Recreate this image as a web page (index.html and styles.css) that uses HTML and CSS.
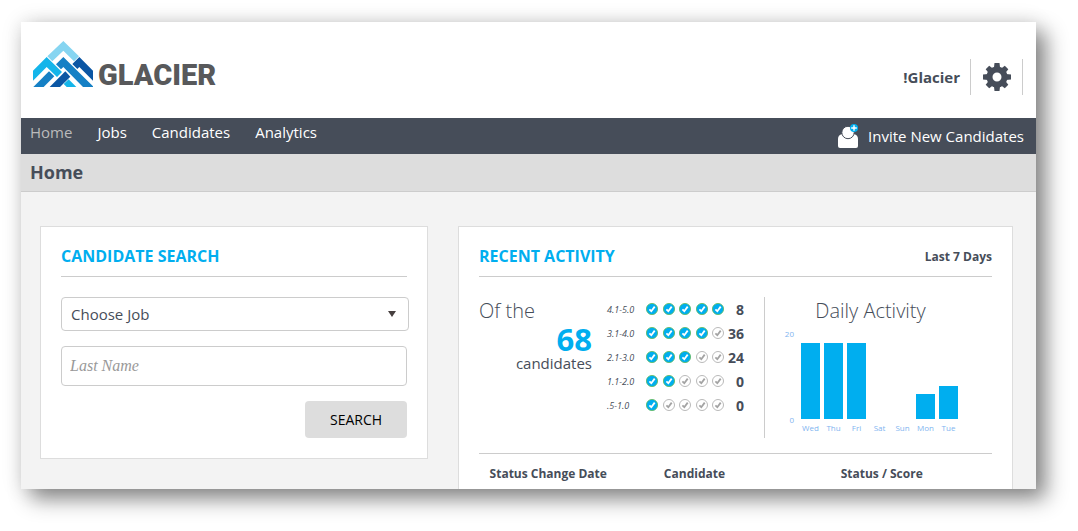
FILE: index.html
```html
<!DOCTYPE html>
<html lang="en">
<head>
    <meta charset="UTF-8">
    <meta name="viewport" content="width=device-width, initial-scale=1.0">
    <title>Glacier - Home</title>
    <link rel="stylesheet" href="styles.css">
</head>
<body>
    <!-- shared icons -->
    <svg class="defs" aria-hidden="true">
        <symbol id="check-on" viewBox="0 0 12 12">
            <circle cx="6" cy="6" r="5.6" fill="#00aeef" stroke="#5cb85c" stroke-width="0.8"/>
            <path d="M3.4 6.4l1.9 1.8 3.4-4.6" fill="none" stroke="#fff" stroke-width="1.8"/>
        </symbol>
        <symbol id="check-off" viewBox="0 0 12 12">
            <circle cx="6" cy="6" r="5.5" fill="#fff" stroke="#b9b9b9" stroke-width="1"/>
            <path d="M3.4 6.4l1.9 1.8 3.4-4.6" fill="none" stroke="#a3a3a3" stroke-width="1.8"/>
        </symbol>
    </svg>

    <div class="page">
        <header class="header">
            <a href="#" class="logo">
                <svg class="logo-mark" viewBox="0 0 180 138" aria-hidden="true">
                    <path fill="#86d5f1" d="M91 0L138 46 123 61 91 29 58 61 43 46z"/>
                    <path fill="#14b5ea" d="M0 89L41 48 87 93 72 108 41 78 0 119z"/>
                    <path fill="#1580c5" d="M91 48L180 136V138H150L91 78 84 85 69 70z"/>
                    <path fill="#0b56a4" d="M139 48L180 89V119L139 78 133 84 118 69z"/>
                    <path fill="#1580c5" d="M1 138L48 91 64 106 32 138z"/>
                    <path fill="#0b56a4" d="M50 138L97 91 112 107 81 138z"/>
                    <path fill="#14b5ea" d="M107 115L130 138H101L92 129z"/>
                </svg>
                <span class="logo-text">GLACIER</span>
            </a>
            <div class="account">
                <span class="account-name">!Glacier</span>
                <a href="#" class="settings" aria-label="Settings">
                    <svg viewBox="0 0 28 28" fill="#464d59">
                        <circle cx="14" cy="14" r="7.5" fill="none" stroke="#464d59" stroke-width="6"/>
                        <path d="M11.5 0h5l.6 5h-6.2zM11.5 28h5l.6-5h-6.2zM0 11.5v5l5 .6v-6.2zM28 11.5v5l-5 .6v-6.2z"/>
                        <path transform="rotate(45 14 14)" d="M11.5 0.5h5l.6 5h-6.2zM11.5 27.5h5l.6-5h-6.2zM0.5 11.5v5l5 .6v-6.2zM27.5 11.5v5l-5 .6v-6.2z"/>
                    </svg>
                </a>
            </div>
        </header>

        <nav class="navbar">
            <ul class="menu">
                <li><a href="#" class="active">Home</a></li>
                <li><a href="#">Jobs</a></li>
                <li><a href="#">Candidates</a></li>
                <li><a href="#">Analytics</a></li>
            </ul>
            <a href="#" class="invite">
                <svg viewBox="0 0 20 24" aria-hidden="true">
                    <path fill="#fff" d="M0 22v-7q0-4 4-5h12q4 1 4 5v7q0 2-2 2H2q-2 0-2-2z"/>
                    <circle cx="10" cy="8.5" r="6.2" fill="#fff" stroke="#464d59" stroke-width="1"/>
                    <circle cx="16" cy="4" r="4" fill="#00aeef"/>
                    <path d="M16 1.2v5.6M13.2 4h5.6" stroke="#fff" stroke-width="1.4"/>
                </svg>
                Invite New Candidates
            </a>
        </nav>

        <h1 class="page-title">Home</h1>

        <main class="content">
            <section class="card search-card">
                <div class="card-header">
                    <h2>CANDIDATE SEARCH</h2>
                </div>
                <form class="search-form">
                    <select name="job" aria-label="Choose Job">
                        <option>Choose Job</option>
                    </select>
                    <input type="text" name="lastname" placeholder="Last Name" aria-label="Last Name">
                    <button type="submit">SEARCH</button>
                </form>
            </section>

            <section class="card activity-card">
                <div class="card-header">
                    <h2>RECENT ACTIVITY</h2>
                    <span class="period">Last 7 Days</span>
                </div>

                <div class="summary">
                    <div class="total">
                        <div class="total-label">Of the</div>
                        <div class="total-number">68</div>
                        <div class="total-unit">candidates</div>
                    </div>

                    <div class="scores">
                        <div class="score-row">
                            <span class="range">4.1-5.0</span>
                            <span class="checks">
                                <svg><use href="#check-on"/></svg>
                                <svg><use href="#check-on"/></svg>
                                <svg><use href="#check-on"/></svg>
                                <svg><use href="#check-on"/></svg>
                                <svg><use href="#check-on"/></svg>
                            </span>
                            <span class="count">8</span>
                        </div>
                        <div class="score-row">
                            <span class="range">3.1-4.0</span>
                            <span class="checks">
                                <svg><use href="#check-on"/></svg>
                                <svg><use href="#check-on"/></svg>
                                <svg><use href="#check-on"/></svg>
                                <svg><use href="#check-on"/></svg>
                                <svg><use href="#check-off"/></svg>
                            </span>
                            <span class="count">36</span>
                        </div>
                        <div class="score-row">
                            <span class="range">2.1-3.0</span>
                            <span class="checks">
                                <svg><use href="#check-on"/></svg>
                                <svg><use href="#check-on"/></svg>
                                <svg><use href="#check-on"/></svg>
                                <svg><use href="#check-off"/></svg>
                                <svg><use href="#check-off"/></svg>
                            </span>
                            <span class="count">24</span>
                        </div>
                        <div class="score-row">
                            <span class="range">1.1-2.0</span>
                            <span class="checks">
                                <svg><use href="#check-on"/></svg>
                                <svg><use href="#check-on"/></svg>
                                <svg><use href="#check-off"/></svg>
                                <svg><use href="#check-off"/></svg>
                                <svg><use href="#check-off"/></svg>
                            </span>
                            <span class="count">0</span>
                        </div>
                        <div class="score-row">
                            <span class="range">.5-1.0</span>
                            <span class="checks">
                                <svg><use href="#check-on"/></svg>
                                <svg><use href="#check-off"/></svg>
                                <svg><use href="#check-off"/></svg>
                                <svg><use href="#check-off"/></svg>
                                <svg><use href="#check-off"/></svg>
                            </span>
                            <span class="count">0</span>
                        </div>
                    </div>

                    <div class="daily">
                        <h3>Daily Activity</h3>
                        <div class="chart">
                            <div class="axis"><span>20</span><span>0</span></div>
                            <div class="bars">
                                <div class="bar" style="height: 90%"></div>
                                <div class="bar" style="height: 90%"></div>
                                <div class="bar" style="height: 90%"></div>
                                <div class="bar" style="height: 0%"></div>
                                <div class="bar" style="height: 0%"></div>
                                <div class="bar" style="height: 30%"></div>
                                <div class="bar" style="height: 39%"></div>
                            </div>
                            <div class="days">
                                <span>Wed</span><span>Thu</span><span>Fri</span><span>Sat</span><span>Sun</span><span>Mon</span><span>Tue</span>
                            </div>
                        </div>
                    </div>
                </div>

                <table class="history">
                    <thead>
                        <tr>
                            <th class="col-date">Status Change Date</th>
                            <th class="col-name">Candidate</th>
                            <th>Status / Score</th>
                        </tr>
                    </thead>
                </table>
            </section>
        </main>
    </div>
</body>
</html>
```

FILE: styles.css
```css
* {
    box-sizing: border-box;
}

body {
    margin: 0;
    padding: 22px 42px 42px 21px;
    background-color: #fff;
    color: #464d59;
    font-family: "Open Sans", "Noto Sans", sans-serif;
    font-size: 15px;
}

a {
    color: inherit;
    text-decoration: none;
}

h1, h2, h3 {
    margin: 0;
}

.defs {
    display: none;
}

.page {
    background-color: #f3f3f3;
    box-shadow: 10px 10px 20px rgba(0, 0, 0, 0.45), 0 0 20px rgba(0, 0, 0, 0.12);
}

/* header */
.header {
    display: flex;
    justify-content: space-between;
    align-items: center;
    height: 96px;
    padding: 0 13px 0 12px;
    background-color: #fff;
}

.logo {
    display: flex;
    align-items: flex-end;
    gap: 5px;
    padding-bottom: 12px;
}

.logo-mark {
    width: 60px;
    height: 46px;
}

.logo-text {
    color: #58595b;
    font-family: "Roboto", "Liberation Sans", sans-serif;
    font-size: 29px;
    font-weight: 900;
    line-height: 24px;
}

.account {
    display: flex;
    align-items: center;
    margin-top: 14px;
    font-weight: bold;
}

.account-name {
    padding-right: 10px;
}

.settings {
    display: flex;
    align-items: center;
    height: 36px;
    padding: 0 11px 0 12px;
    border-left: 1px solid #ccc;
    border-right: 1px solid #ccc;
}

.settings svg {
    width: 28px;
    height: 28px;
}

/* navigation */
.navbar {
    display: flex;
    justify-content: space-between;
    height: 36px;
    padding: 0 12px 0 9px;
    background-color: #464d59;
    color: #fff;
}

.menu {
    display: flex;
    gap: 25px;
    margin: 0;
    padding: 0;
    list-style: none;
    line-height: 28px;
}

.menu .active {
    color: #bbb;
}

.invite {
    display: flex;
    align-items: center;
    gap: 10px;
    line-height: 34px;
}

.invite svg {
    width: 20px;
    height: 24px;
}

.page-title {
    padding: 0 9px;
    background-color: #ddd;
    border-bottom: 1px solid #ccc;
    font-size: 18px;
    line-height: 37px;
}

/* cards */
.content {
    display: grid;
    grid-template-columns: 388fr 555fr;
    align-items: start;
    gap: 30px;
    padding: 34px 23px 0 19px;
}

.card {
    padding: 20px;
    background-color: #fff;
    border: 1px solid #ddd;
}

.card-header {
    display: flex;
    justify-content: space-between;
    padding-bottom: 10px;
    border-bottom: 1px solid #ccc;
    line-height: 19px;
}

.card-header h2 {
    color: #00aeef;
    font-size: 16px;
}

.period {
    font-size: 12px;
    font-weight: bold;
}

/* candidate search */
.search-form {
    display: flex;
    flex-direction: column;
    gap: 15px;
    padding-top: 20px;
}

.search-form select,
.search-form input {
    width: 100%;
    border: 1px solid #ccc;
    border-radius: 4px;
    background-color: #fff;
}

.search-form select {
    width: calc(100% + 2px);
    height: 34px;
    padding: 0 9px;
    appearance: none;
    background-image: url("data:image/svg+xml,%3Csvg xmlns='http://www.w3.org/2000/svg' viewBox='0 0 8 6'%3E%3Cpath fill='%23463f3f' d='M0 0h8L4 6z'/%3E%3C/svg%3E");
    background-repeat: no-repeat;
    background-position: right 12px center;
    background-size: 8px 6px;
    color: #464d59;
    font-family: inherit;
    font-size: 15px;
}

.search-form input {
    height: 40px;
    padding: 0 8px;
    font-family: "Liberation Serif", serif;
    font-size: 16px;
    font-style: italic;
}

.search-form input::placeholder {
    color: #999;
}

.search-form button {
    align-self: flex-end;
    width: 102px;
    height: 37px;
    border: none;
    border-radius: 4px;
    background-color: #ddd;
    color: #000;
    font-family: inherit;
    font-size: 14px;
    cursor: pointer;
}

/* recent activity */
.activity-card {
    padding-bottom: 0;
    border-bottom: none;
}

.summary {
    display: flex;
    padding: 20px 0 15px;
    border-bottom: 1px solid #ccc;
}

.total {
    width: 113px;
    margin-right: 15px;
    text-align: right;
}

.total-label {
    text-align: left;
    font-size: 20px;
    font-weight: 300;
    line-height: 28px;
}

.total-number {
    color: #00aeef;
    font-size: 31px;
    font-weight: bold;
    line-height: 28px;
}

.total-unit {
    line-height: 20px;
}

.scores {
    width: 157px;
    padding-right: 20px;
}

.score-row {
    display: flex;
    align-items: center;
    height: 24px;
}

.range {
    width: 39px;
    font-size: 9px;
    font-style: italic;
}

.checks {
    display: flex;
    justify-content: space-between;
    width: 78px;
}

.checks svg {
    width: 12px;
    height: 12px;
}

.count {
    flex: 1;
    font-size: 14px;
    font-weight: bold;
    text-align: right;
}

.daily {
    flex: 1;
    height: 141px;
    border-left: 1px solid #ccc;
}

.daily h3 {
    padding-right: 16px;
    font-size: 20px;
    font-weight: 300;
    line-height: 28px;
    text-align: center;
}

.chart {
    display: grid;
    grid-template-columns: 29px 157px;
    grid-template-rows: 84px 18px;
    column-gap: 7px;
    padding-top: 10px;
    color: #7fb5f0;
    font-size: 8px;
}

.axis {
    display: flex;
    flex-direction: column;
    justify-content: space-between;
    margin: -6px 0;
    line-height: 10px;
    text-align: right;
}

.bars {
    display: flex;
    align-items: flex-end;
    gap: 4px;
}

.bar {
    flex: 1;
    background-color: #00aeef;
}

.days {
    display: flex;
    gap: 4px;
    grid-column: 2;
    line-height: 18px;
}

.days span {
    display: flex;
    flex: 1 0 0;
    justify-content: center;
    width: 0;
}

.history {
    width: 100%;
    border-collapse: collapse;
    table-layout: fixed;
}

.history th {
    height: 35px;
    padding: 4px 0 0;
    font-size: 12px;
    text-align: center;
    white-space: nowrap;
}

.history .col-date {
    width: 27%;
}

.history .col-name {
    width: 30%;
}
```
